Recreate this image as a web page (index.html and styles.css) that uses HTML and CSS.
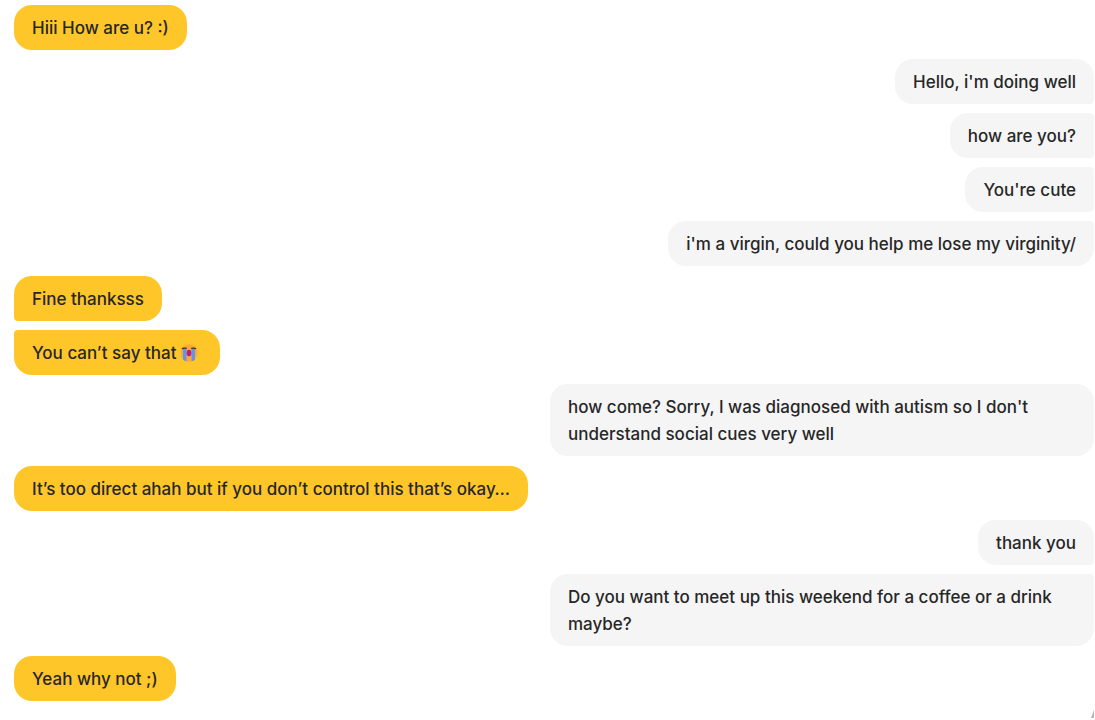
FILE: index.html
```html
<!DOCTYPE html>
<html lang="en">

<head>
    <meta charset="UTF-8">
    <meta name="viewport" content="width=device-width, initial-scale=1.0">
    <title>Chat</title>
    <link rel="stylesheet" href="styles.css">
</head>

<body>
    <main class="thread">
        <div class="group received">
            <p class="bubble">Hiii How are u? :)</p>
        </div>
        <div class="group sent">
            <p class="bubble">Hello, i'm doing well</p>
            <p class="bubble">how are you?</p>
            <p class="bubble">You're cute</p>
            <p class="bubble">i'm a virgin, could you help me lose my virginity/</p>
        </div>
        <div class="group received">
            <p class="bubble">Fine thanksss</p>
            <p class="bubble">You can’t say that
                <!-- crying face -->
                <svg class="emoji" viewBox="0 0 21 20" role="img" aria-label="loudly crying face">
                    <circle cx="8" cy="10" r="8.700" fill="#ffa834" />
                    <path d="M2 6H5.500V18Q3.500 18 2 16.500Z" fill="#5a97f2" />
                    <path d="M10.500 6H14V16.500Q12.500 18 10.500 18Z" fill="#5a97f2" />
                    <path d="M1 6Q2 4.500 5.800 5.300M10.200 5.300Q14 4.500 15 6" fill="none" stroke="#3d2c35" stroke-width="1.300" />
                    <ellipse cx="8" cy="10" rx="2.400" ry="3.200" fill="#bb1d80" />
                </svg>
            </p>
        </div>
        <div class="group sent">
            <p class="bubble">how come? Sorry, I was diagnosed with autism so I don't understand social cues very well</p>
        </div>
        <div class="group received">
            <p class="bubble">It’s too direct ahah but if you don’t control this that’s okay…</p>
        </div>
        <div class="group sent">
            <p class="bubble">thank you</p>
            <p class="bubble">Do you want to meet up this weekend for a coffee or a drink maybe?</p>
        </div>
        <div class="group received">
            <p class="bubble">Yeah why not ;)</p>
        </div>
        <!-- corner mark -->
        <svg class="corner" viewBox="0 0 3 8" aria-hidden="true">
            <path d="M3 0V8H0Z" fill="#b4b4b4" />
        </svg>
    </main>
</body>

</html>
```
FILE: styles.css
```css
body {
    margin: 0;
    background: #fff;
    color: #272727;
    font-family: Inter, "Liberation Sans", sans-serif;
    font-size: 17px;
    font-weight: 500;
    line-height: 27px;
}

.thread {
    display: flex;
    flex-direction: column;
    gap: 9px;
    padding: 5px 1px 0 14px;
}

/* consecutive messages from one person */
.group {
    display: flex;
    flex-direction: column;
    gap: 9px;
}

.received {
    align-items: flex-start;
}

.sent {
    align-items: flex-end;
}

.sent + .received {
    margin-top: 1px;
}

.bubble {
    box-sizing: border-box;
    max-width: calc(50% + 4px);
    margin: 0;
    padding: 10px 18px 8px;
    border-radius: 18px;
}

.received .bubble {
    background: #ffc629;
}

.sent .bubble {
    background: #f5f5f5;
}

/* flatten the corners where bubbles of a group meet */
.received .bubble:not(:last-child) {
    border-bottom-left-radius: 4px;
}

.received .bubble:not(:first-child) {
    border-top-left-radius: 4px;
}

.sent .bubble:not(:last-child) {
    border-bottom-right-radius: 4px;
}

.sent .bubble:not(:first-child) {
    border-top-right-radius: 4px;
}

.emoji {
    width: 21px;
    height: 20px;
    vertical-align: -4px;
}

.corner {
    align-self: flex-end;
    width: 3px;
    height: 8px;
}
```
